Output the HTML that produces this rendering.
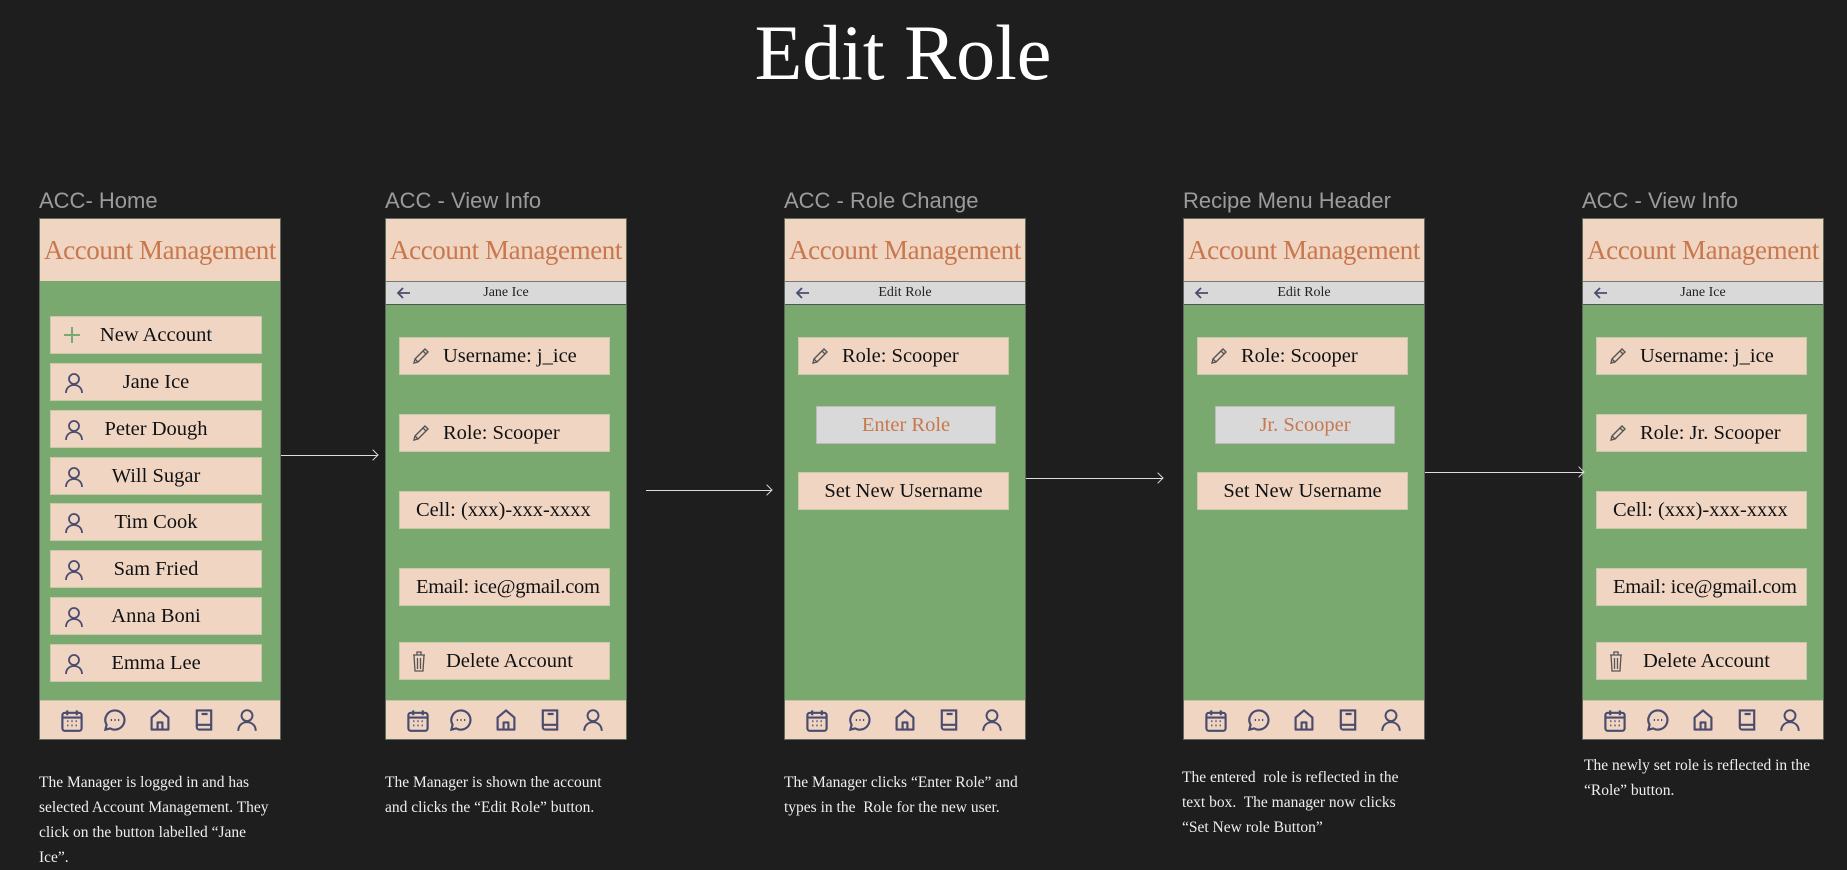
<!DOCTYPE html>
<html><head><meta charset="utf-8">
<style>
*{margin:0;padding:0;box-sizing:border-box}
body{width:1847px;height:863px;background:#1e1e1e;position:relative;overflow:hidden;font-family:"Liberation Serif",serif}
.t{position:absolute;left:0;width:1806px;text-align:center;top:8px;font-size:78px;color:#fff;font-family:"Liberation Serif",serif}
.lbl{position:absolute;top:188px;font-family:"Liberation Sans",sans-serif;font-size:22px;color:#9b9b9b}
.fr{position:absolute;top:218px;width:242px;height:522px;background:#7aa970;border:1px solid #5e6a5a}
.hd{position:absolute;left:0;top:0;width:100%;height:62px;background:#f0d5c3;color:#c8784c;font-size:27px;text-align:center;line-height:62px;white-space:nowrap;letter-spacing:-0.4px}
.sub{position:absolute;left:0;top:62px;width:100%;height:24px;background:#d9d9d9;border-top:1px solid #777;border-bottom:1px solid #555;font-size:14px;text-align:center;line-height:22px;color:#222}
.sub svg{position:absolute;left:10px;top:4px}
.nav{position:absolute;left:0;bottom:0;width:100%;height:39px;background:#f0d5c3;border-top:1px solid #c9c3a0}
.nav svg{position:absolute;top:7px}
.b{position:absolute;height:38px;background:#f0d5c3;border:1px solid #c9c8a8;font-size:20.5px;line-height:36px;color:#111;white-space:nowrap}
.b svg{position:absolute;left:11px;top:8px}
.c{text-align:center}
.g{background:#d9d9d9;color:#c8784c;text-align:center;border-color:#bbb}
.d{position:absolute;font-size:15.5px;line-height:25px;color:#eee}
.ar{position:absolute;height:1px;background:#ddd}
.ar:after{content:"";position:absolute;right:0;top:-4px;width:7px;height:7px;border-top:1px solid #ddd;border-right:1px solid #ddd;transform:rotate(45deg)}
</style></head><body>
<svg width="0" height="0" style="position:absolute">
<defs>
<symbol id="user" viewBox="0 0 20 22"><circle cx="10" cy="7" r="5" fill="none" stroke="#4a4c6e" stroke-width="1.8"/><path d="M2 21c0-5 3.5-8 8-8s8 3 8 8" fill="none" stroke="#4a4c6e" stroke-width="1.8"/></symbol>
<symbol id="pen" viewBox="0 0 20 20"><path d="M3 17l1-4L14 3l3 3L7 16z M4 13l3 3 M12 5l3 3" fill="none" stroke="#555" stroke-width="1.4"/></symbol>
<symbol id="trash" viewBox="0 0 16 22"><path d="M2 5h12 M6 5V2h4v3 M3 5l1 16h8l1-16 M6.5 8v11 M9.5 8v11" fill="none" stroke="#555" stroke-width="1.3"/></symbol>
<symbol id="cal" viewBox="0 0 20 20"><rect x="2" y="4" width="16" height="15" rx="2" fill="none" stroke="#4a4c6e" stroke-width="1.8"/><path d="M2 8h16 M6 2v4 M14 2v4" stroke="#4a4c6e" stroke-width="1.8"/><path d="M6 11h1 M9.5 11h1 M13 11h1 M6 14.5h1 M9.5 14.5h1 M13 14.5h1" stroke="#4a4c6e" stroke-width="1.6"/></symbol>
<symbol id="chat" viewBox="0 0 20 20"><path d="M10 2a8 8 0 1 1-4 15l-4 1 1-4A8 8 0 0 1 10 2z" fill="none" stroke="#4a4c6e" stroke-width="1.8"/><path d="M6.5 10h1 M9.5 10h1 M12.5 10h1" stroke="#4a4c6e" stroke-width="1.6"/></symbol>
<symbol id="home" viewBox="0 0 20 20"><path d="M3 18V8l7-6 7 6v10z M8 18v-6h4v6" fill="none" stroke="#4a4c6e" stroke-width="1.8" stroke-linejoin="round"/></symbol>
<symbol id="book" viewBox="0 0 20 20"><path d="M4 2h12v16H6a2 2 0 0 1-2-2z M4 14h12 M8 5h5" fill="none" stroke="#4a4c6e" stroke-width="1.8"/></symbol>
<symbol id="plus" viewBox="0 0 20 20"><path d="M10 2v16 M2 10h16" stroke="#7aa970" stroke-width="2"/></symbol>
<symbol id="back" viewBox="0 0 16 14"><path d="M14 7H2 M7 2L2 7l5 5" fill="none" stroke="#4a4c6e" stroke-width="1.8"/></symbol>
<symbol id="navset" viewBox="0 0 242 24"><use href="#cal" x="20" y="0" width="24" height="24"/><use href="#chat" x="63" y="0" width="24" height="24"/><use href="#home" x="108" y="0" width="24" height="24"/><use href="#book" x="152" y="0" width="24" height="24"/><use href="#user" x="195" y="0" width="24" height="24"/></symbol>
</defs></svg>

<div class="t">Edit Role</div>

<div class="lbl" style="left:39px">ACC- Home</div>
<div class="lbl" style="left:385px">ACC - View Info</div>
<div class="lbl" style="left:784px">ACC - Role Change</div>
<div class="lbl" style="left:1183px">Recipe Menu Header</div>
<div class="lbl" style="left:1582px">ACC - View Info</div>

<!-- Frame 1 -->
<div class="fr" style="left:39px">
<div class="hd">Account Management</div>
<div class="b c" style="left:10px;top:97px;width:212px"><svg width="20" height="20"><use href="#plus"/></svg>New Account</div>
<div class="b c" style="left:10px;top:144px;width:212px"><svg width="20" height="22" style="left:13px"><use href="#user"/></svg>Jane Ice</div>
<div class="b c" style="left:10px;top:191px;width:212px"><svg width="20" height="22" style="left:13px"><use href="#user"/></svg>Peter Dough</div>
<div class="b c" style="left:10px;top:238px;width:212px"><svg width="20" height="22" style="left:13px"><use href="#user"/></svg>Will Sugar</div>
<div class="b c" style="left:10px;top:284px;width:212px"><svg width="20" height="22" style="left:13px"><use href="#user"/></svg>Tim Cook</div>
<div class="b c" style="left:10px;top:331px;width:212px"><svg width="20" height="22" style="left:13px"><use href="#user"/></svg>Sam Fried</div>
<div class="b c" style="left:10px;top:378px;width:212px"><svg width="20" height="22" style="left:13px"><use href="#user"/></svg>Anna Boni</div>
<div class="b c" style="left:10px;top:425px;width:212px"><svg width="20" height="22" style="left:13px"><use href="#user"/></svg>Emma Lee</div>
<div class="nav"><svg width="242" height="24" style="left:0"><use href="#navset"/></svg></div>
</div>

<!-- Frame 2 -->
<div class="fr" style="left:385px">
<div class="hd">Account Management</div>
<div class="sub"><svg width="16" height="14"><use href="#back"/></svg>Jane Ice</div>
<div class="b" style="left:13px;top:118px;width:211px;padding-left:43px"><svg width="20" height="20"><use href="#pen"/></svg>Username: j_ice</div>
<div class="b" style="left:13px;top:195px;width:211px;padding-left:43px"><svg width="20" height="20"><use href="#pen"/></svg>Role: Scooper</div>
<div class="b" style="left:13px;top:272px;width:211px;padding-left:16px">Cell: (xxx)-xxx-xxxx</div>
<div class="b" style="left:13px;top:349px;width:211px;padding-left:16px;letter-spacing:-0.3px">Email: ice@gmail.com</div>
<div class="b" style="left:13px;top:423px;width:211px;padding-left:46px"><svg width="16" height="22" style="top:7px"><use href="#trash"/></svg>Delete Account</div>
<div class="nav"><svg width="242" height="24" style="left:0"><use href="#navset"/></svg></div>
</div>

<!-- Frame 3 -->
<div class="fr" style="left:784px">
<div class="hd">Account Management</div>
<div class="sub"><svg width="16" height="14"><use href="#back"/></svg>Edit Role</div>
<div class="b" style="left:13px;top:118px;width:211px;padding-left:43px"><svg width="20" height="20"><use href="#pen"/></svg>Role: Scooper</div>
<div class="b g" style="left:31px;top:187px;width:180px">Enter Role</div>
<div class="b c" style="left:13px;top:253px;width:211px">Set New Username</div>
<div class="nav"><svg width="242" height="24" style="left:0"><use href="#navset"/></svg></div>
</div>

<!-- Frame 4 -->
<div class="fr" style="left:1183px">
<div class="hd">Account Management</div>
<div class="sub"><svg width="16" height="14"><use href="#back"/></svg>Edit Role</div>
<div class="b" style="left:13px;top:118px;width:211px;padding-left:43px"><svg width="20" height="20"><use href="#pen"/></svg>Role: Scooper</div>
<div class="b g" style="left:31px;top:187px;width:180px">Jr. Scooper</div>
<div class="b c" style="left:13px;top:253px;width:211px">Set New Username</div>
<div class="nav"><svg width="242" height="24" style="left:0"><use href="#navset"/></svg></div>
</div>

<!-- Frame 5 -->
<div class="fr" style="left:1582px">
<div class="hd">Account Management</div>
<div class="sub"><svg width="16" height="14"><use href="#back"/></svg>Jane Ice</div>
<div class="b" style="left:13px;top:118px;width:211px;padding-left:43px"><svg width="20" height="20"><use href="#pen"/></svg>Username: j_ice</div>
<div class="b" style="left:13px;top:195px;width:211px;padding-left:43px"><svg width="20" height="20"><use href="#pen"/></svg>Role: Jr. Scooper</div>
<div class="b" style="left:13px;top:272px;width:211px;padding-left:16px">Cell: (xxx)-xxx-xxxx</div>
<div class="b" style="left:13px;top:349px;width:211px;padding-left:16px;letter-spacing:-0.3px">Email: ice@gmail.com</div>
<div class="b" style="left:13px;top:423px;width:211px;padding-left:46px"><svg width="16" height="22" style="top:7px"><use href="#trash"/></svg>Delete Account</div>
<div class="nav"><svg width="242" height="24" style="left:0"><use href="#navset"/></svg></div>
</div>

<!-- arrows -->
<div class="ar" style="left:281px;top:455px;width:96px"></div>
<div class="ar" style="left:646px;top:490px;width:125px"></div>
<div class="ar" style="left:1026px;top:478px;width:136px"></div>
<div class="ar" style="left:1425px;top:472px;width:158px"></div>

<!-- descriptions -->
<div class="d" style="left:39px;top:770px;width:238px">The Manager is logged in and has selected Account Management. They click on the button labelled “Jane Ice”.</div>
<div class="d" style="left:385px;top:770px;width:240px">The Manager is shown the account and clicks the “Edit Role” button.</div>
<div class="d" style="left:784px;top:770px;width:240px">The Manager clicks “Enter Role” and types in the&nbsp; Role for the new user.</div>
<div class="d" style="left:1182px;top:765px;width:240px">The entered&nbsp; role is reflected in the text box.&nbsp; The manager now clicks “Set New role Button”</div>
<div class="d" style="left:1584px;top:753px;width:250px">The newly set role is reflected in the “Role” button.</div>
</body></html>
